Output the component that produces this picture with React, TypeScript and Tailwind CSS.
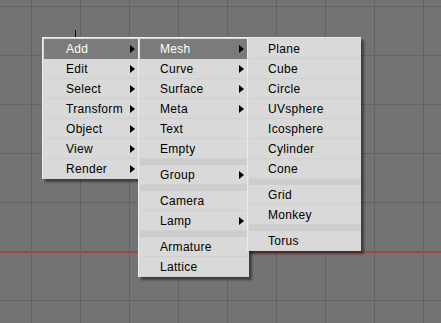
type Item = { label: string; sub?: boolean; active?: boolean; sep?: boolean };

const addMenu: Item[] = [
  { label: 'Add', sub: true, active: true },
  { label: 'Edit', sub: true },
  { label: 'Select', sub: true },
  { label: 'Transform', sub: true },
  { label: 'Object', sub: true },
  { label: 'View', sub: true },
  { label: 'Render', sub: true },
];

const typeMenu: Item[] = [
  { label: 'Mesh', sub: true, active: true },
  { label: 'Curve', sub: true },
  { label: 'Surface', sub: true },
  { label: 'Meta', sub: true },
  { label: 'Text' },
  { label: 'Empty' },
  { label: '', sep: true },
  { label: 'Group', sub: true },
  { label: '', sep: true },
  { label: 'Camera' },
  { label: 'Lamp', sub: true },
  { label: '', sep: true },
  { label: 'Armature' },
  { label: 'Lattice' },
];

const meshMenu: Item[] = [
  { label: 'Plane' },
  { label: 'Cube' },
  { label: 'Circle' },
  { label: 'UVsphere' },
  { label: 'Icosphere' },
  { label: 'Cylinder' },
  { label: 'Cone' },
  { label: '', sep: true },
  { label: 'Grid' },
  { label: 'Monkey' },
  { label: '', sep: true },
  { label: 'Torus' },
];

function Arrow() {
  return (
    <svg width="5" height="8" viewBox="0 0 5 8" className="shrink-0">
      <path d="M0 0 L5 4 L0 8 Z" fill="#000" />
    </svg>
  );
}

function Menu({ items, className, pad }: { items: Item[]; className: string; pad: string }) {
  return (
    <div
      className={`relative flex flex-col shrink-0 bg-[#d9d9d9] border-t border-l border-[#ececec] pt-px pl-px shadow-[3px_3px_2px_rgba(0,0,0,0.45)] ${className}`}
    >
      {items.map((it, i) =>
        it.sep ? (
          <div key={i} className="h-[6px] bg-[#cdcdcd]" />
        ) : (
          <div
            key={i}
            className={`h-5 flex items-center border-b ${pad} ${
              it.active ? 'bg-[#7b7b7b] text-white border-[#7b7b7b]' : 'text-black border-[#d0d0d0]'
            }`}
          >
            <span className="flex-1 tracking-[0.3px]">{it.label}</span>
            {it.sub && <Arrow />}
          </div>
        )
      )}
    </div>
  );
}

export default function App() {
  return (
    <div
      className="relative w-[441px] h-[323px] overflow-hidden bg-[#737373] text-[12px] leading-none"
      style={{ fontFamily: '"Liberation Sans", Arial, sans-serif' }}
    >
      {/* viewport grid */}
      <div className="absolute inset-0 bg-[linear-gradient(to_right,#636363_1px,transparent_1px),linear-gradient(to_bottom,#636363_1px,transparent_1px)] bg-[size:49px_49px] bg-[position:31px_6px]" />
      {/* x axis */}
      <div className="absolute left-0 right-0 top-[252px] h-px bg-[#9a4848]" />
      {/* 3d cursor tick */}
      <div className="absolute left-[75px] top-[30px] w-px h-[7px] bg-black" />

      {/* cascading toolbox menus */}
      <div className="absolute left-[42px] top-[37px] flex items-start">
        <Menu items={addMenu} className="w-[96px]" pad="pl-[22px] pr-[3px]" />
        <Menu items={typeMenu} className="w-[111px]" pad="pl-[20px] pr-[5px]" />
        <Menu items={meshMenu} className="w-[114px] -ml-[2px]" pad="pl-[19px] pr-[5px]" />
      </div>
    </div>
  );
}
